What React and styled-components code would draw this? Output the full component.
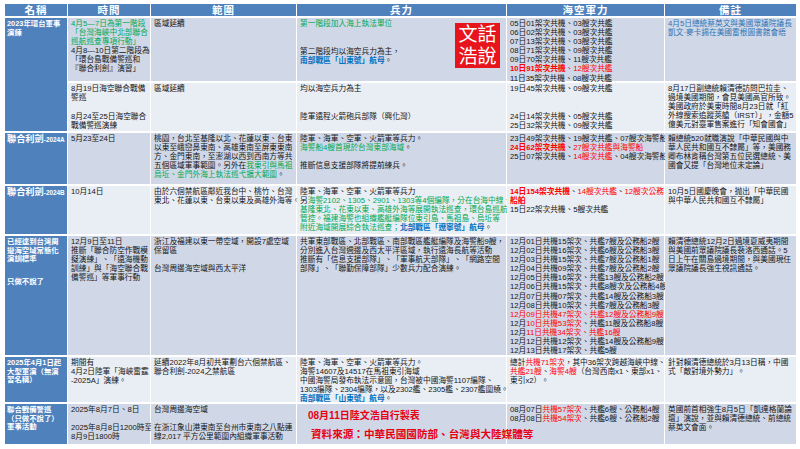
import React from 'react';
import styled, { createGlobalStyle } from 'styled-components';

const GlobalStyle = createGlobalStyle`
  html, body {
    margin: 0;
    padding: 0;
    background: #fff;
  }
  body {
    font-family: "Liberation Sans", "Noto Sans CJK TC", sans-serif;
  }
`;

const Page = styled.div`
  width: 800px;
  height: 449px;
  padding: 4px 4px 0 5px;
  box-sizing: border-box;
  overflow: hidden;
  background: #fff;
`;

// whole chart is one grid, header + 7 bands
const Table = styled.div`
  display: grid;
  grid-template-columns: 62px 82px 145px 209px 157px 131px;
  grid-template-rows: 12px 63px 48px 51px 48px 119px 45px 40px;
  column-gap: 1px;
  row-gap: 2px;
`;

const Head = styled.div`
  background: #4f81bd;
  color: #fff;
  font-size: 10.5px;
  font-weight: 700;
  line-height: 12px;
  text-align: center;
  letter-spacing: 1px;
`;

const Name = styled.div`
  grid-row: ${p => (p.$span ? `span ${p.$span}` : 'auto')};
  background: #4f81bd;
  color: #fff;
  font-size: 7.4px;
  font-weight: 700;
  line-height: 8.6px;
  padding: 2px 1px 0 2px;
  white-space: nowrap;
  overflow: hidden;
`;

const Cell = styled.div`
  position: relative;
  z-index: ${p => (p.$over ? 2 : 'auto')};
  background: ${p => (p.$tone === 'dark' ? '#d0d8e8' : '#e9edf4')};
  color: #151515;
  font-size: 7.7px;
  line-height: 9.1px;
  padding: 1px 1px 0 3px;
  white-space: nowrap;
`;

const Ln = styled.div`
  white-space: nowrap;
`;

const Sp = styled.div`
  height: ${p => p.$h}px;
`;

const G = styled.span`
  color: #00a84f;
`;

const R = styled.span`
  color: #ff0000;
  font-weight: ${p => (p.$b ? 700 : 400)};
`;

const B = styled.span`
  color: #0070c0;
  font-weight: 700;
`;

const Note = styled.span`
  color: #2e75b6;
`;

const Big = styled.span`
  font-size: 9.2px;
`;

const Small = styled.span`
  font-size: 6.4px;
`;

const Stamp = styled.div`
  position: absolute;
  left: 158px;
  top: 5px;
  width: 45px;
  height: 45px;
  background: #e8141c;
  color: #fff;
  font-size: 19px;
  line-height: 22px;
  text-align: center;
  display: flex;
  flex-direction: column;
  justify-content: center;
`;

const Sign = styled.div`
  color: #e60012;
  font-weight: 700;
  font-size: ${p => p.$size}px;
  line-height: 13px;
  padding-left: ${p => p.$indent}px;
  margin-top: ${p => p.$mt}px;
  white-space: nowrap;
`;

const heads = ['名稱', '時間', '範圍', '兵力', '海空軍力', '備註'];

const App = () => {
  return (
    <Page>
      <GlobalStyle />
      <Table>
        {heads.map(h => (
          <Head key={h}>{h}</Head>
        ))}

        {/* 2023 */}
        <Name $span={2}>
          <Ln>2023年環台軍事</Ln>
          <Ln>演練</Ln>
        </Name>
        <Cell $tone="dark">
          <Ln><G>4月5—7日為第一階段</G></Ln>
          <Ln><G>「台灣海峽中北部聯合</G></Ln>
          <Ln><G>巡航巡查專項行動」</G></Ln>
          <Ln>4月8—10日第二階段為</Ln>
          <Ln>「環台島戰備警巡和</Ln>
          <Ln>『聯合利劍』演習」</Ln>
        </Cell>
        <Cell $tone="dark">
          <Ln>區域延續</Ln>
        </Cell>
        <Cell $tone="dark">
          <Ln><G>第一階段加入海上執法單位</G></Ln>
          <Sp $h={19} />
          <Ln>第二階段均以海空兵力為主，</Ln>
          <Ln><B>南部戰區「山東號」航母</B>。</Ln>
          <Stamp>
            <span>文話</span>
            <span>浩說</span>
          </Stamp>
        </Cell>
        <Cell $tone="dark">
          <Ln>05日01架次共機、03艘次共艦</Ln>
          <Ln>06日02架次共機、03艘次共艦</Ln>
          <Ln>07日13架次共機、03艘次共艦</Ln>
          <Ln>08日71架次共機、09艘次共艦</Ln>
          <Ln>09日70架次共機、11艘次共艦</Ln>
          <Ln><R $b>10日91架次共機</R><R>、12艘次共艦</R></Ln>
          <Ln>11日35架次共機、08艘次共艦</Ln>
        </Cell>
        <Cell $tone="dark">
          <Ln><Note>4月5日總統蔡英文與美國眾議院議長</Note></Ln>
          <Ln><Note>凱文·麥卡錫在美國雷根圖書館會晤</Note></Ln>
        </Cell>

        <Cell $tone="light">
          <Ln>8月19日海空聯合戰備</Ln>
          <Ln>警巡</Ln>
          <Sp $h={10} />
          <Ln>8月24至25日海空聯合</Ln>
          <Ln>戰備警巡演練</Ln>
        </Cell>
        <Cell $tone="light">
          <Ln>區域延續</Ln>
        </Cell>
        <Cell $tone="light">
          <Ln>均以海空兵力為主</Ln>
          <Sp $h={19} />
          <Ln>陸軍遠程火箭砲兵部隊（興化灣）</Ln>
        </Cell>
        <Cell $tone="light">
          <Ln>19日45架次共機、09艘次共艦</Ln>
          <Sp $h={19} />
          <Ln>24日14架次共機、05艘次共艦</Ln>
          <Ln>25日32架次共機、09艘次共艦</Ln>
        </Cell>
        <Cell $tone="light">
          <Ln>8月17日副總統賴清德訪問巴拉圭、</Ln>
          <Ln>過境美國期間，會見美國高官所致。</Ln>
          <Ln>美國政府於美東時間8月23日就「紅</Ln>
          <Ln>外線搜索追蹤莢艙（IRST）」，金額5</Ln>
          <Ln>億美元對臺軍售案進行「知會國會」</Ln>
        </Cell>

        {/* 2024A */}
        <Name>
          <Ln><Big>聯合利劍</Big><Small>-2024A</Small></Ln>
        </Name>
        <Cell $tone="dark">
          <Ln>5月23至24日</Ln>
        </Cell>
        <Cell $tone="dark">
          <Ln>桃園，台北至基隆以北、花蓮以東、台東</Ln>
          <Ln>以東至峨巒鼻東南、高雄東南至屏東東南</Ln>
          <Ln>方、金門東南，至澎湖以西到西南方等共</Ln>
          <Ln>五個區域軍事範圍。另外在<G>我東引與馬祖</G></Ln>
          <Ln><G>烏坵、金門外海上執法巡弋擴大範圍</G>。</Ln>
        </Cell>
        <Cell $tone="dark">
          <Ln>陸軍、海軍、空軍、火箭軍等兵力。</Ln>
          <Ln><G>海警船4艘首現於台灣東部海域</G>。</Ln>
          <Sp $h={9} />
          <Ln>推斷信息支援部隊將提前練兵。</Ln>
        </Cell>
        <Cell $tone="dark">
          <Ln>23日49架次共機、19艘次共艦、07艘次海警船</Ln>
          <Ln><R $b>24日62架次共機</R>、<R>27艘次共艦與海警船</R></Ln>
          <Ln>25日07架次共機、<R>14艘次共艦</R>、04艘次海警船</Ln>
        </Cell>
        <Cell $tone="dark">
          <Ln>賴總統520就職演說「中華民國與中</Ln>
          <Ln>華人民共和國互不隸屬」等，美國務</Ln>
          <Ln>卿布林肯稱台灣第五位民選總統、美</Ln>
          <Ln>國會又提「台灣地位未定論」</Ln>
        </Cell>

        {/* 2024B */}
        <Name>
          <Ln><Big>聯合利劍</Big><Small>-2024B</Small></Ln>
        </Name>
        <Cell $tone="light">
          <Ln>10月14日</Ln>
        </Cell>
        <Cell $tone="light">
          <Ln>由於六個禁航區鄰近我台中、桃竹、台灣</Ln>
          <Ln>東北、花蓮以東、台東以東及高雄外海等。</Ln>
        </Cell>
        <Cell $tone="light">
          <Ln>陸軍、海軍、空軍、火箭軍等兵力</Ln>
          <Ln>另<G>海警2102、1305、2901、1303等4個編隊，分在台海中線、</G></Ln>
          <Ln><G>基隆東北、花東以東、高雄外海等展開執法巡查，環台島巡航</G></Ln>
          <Ln><G>管控。福建海警也組織艦艇編隊位東引島、馬祖島、烏坵等</G></Ln>
          <Ln><G>附近海域開展綜合執法巡查；</G><B>北部戰區「遼寧號」航母</B>。</Ln>
        </Cell>
        <Cell $tone="light">
          <Ln><R $b>14日154架次共機</R>、<R>14艘次共艦</R>、<R>12艘次公務</R></Ln>
          <Ln><R $b>船舶</R></Ln>
          <Ln>15日22架次共機、5艘次共艦</Ln>
        </Cell>
        <Cell $tone="light">
          <Ln>10月5日國慶晚會，抛出「中華民國</Ln>
          <Ln>與中華人民共和國互不隸屬」</Ln>
        </Cell>

        {/* 2024 Dec */}
        <Name>
          <Ln>已經達到台灣周</Ln>
          <Ln>邊海空域常態化</Ln>
          <Ln>演訓標準</Ln>
          <Sp $h={14} />
          <Ln>只做不說了</Ln>
        </Name>
        <Cell $tone="dark">
          <Ln>12月9日至11日</Ln>
          <Ln>推斷「聯合防空作戰模</Ln>
          <Ln>擬演練」、「遠海機動</Ln>
          <Ln>訓練」與「海空聯合戰</Ln>
          <Ln>備警巡」等軍事行動</Ln>
        </Cell>
        <Cell $tone="dark">
          <Ln>浙江及福建以東一帶空域，開設7處空域</Ln>
          <Ln>保留區</Ln>
          <Sp $h={9} />
          <Ln>台灣周邊海空域與西太平洋</Ln>
        </Cell>
        <Cell $tone="dark">
          <Ln>共軍東部戰區、北部戰區、南部戰區艦艇編隊及海警船9艘，</Ln>
          <Ln>分別進入台灣週邊及西太平洋區域，執行遠海長航等活動</Ln>
          <Ln>推斷有「信息支援部隊」、「軍事航天部隊」、「網路空間</Ln>
          <Ln>部隊」、「聯勤保障部隊」少數兵力配合演練。</Ln>
        </Cell>
        <Cell $tone="dark">
          <Ln>12月01日共機15架次、共艦7艘及公務船2艘</Ln>
          <Ln>12月02日共機16架次、共艦6艘及公務船3艘</Ln>
          <Ln>12月03日共機15架次、共艦7艘及公務船1艘</Ln>
          <Ln>12月04日共機09架次、共艦7艘及公務船2艘</Ln>
          <Ln>12月05日共機16架次、共艦13艘及公務船2艘</Ln>
          <Ln>12月06日共機15架次、共艦8艘次及公務船4艘</Ln>
          <Ln>12月07日共機07架次、共艦14艘及公務船3艘</Ln>
          <Ln>12月08日共機10架次、共艦7艘及公務船3艘</Ln>
          <Ln><R>12月09日共機47架次、共艦12艘及公務船9艘</R></Ln>
          <Ln>12月<R>10日共機53架次</R>、共艦11艘及公務船8艘</Ln>
          <Ln>12月<R>11日共機34架次、共艦16艘</R></Ln>
          <Ln>12月12日共機12架次、共艦14艘及公務船9艘</Ln>
          <Ln>12月13日共機17架次、共艦5艘</Ln>
        </Cell>
        <Cell $tone="dark">
          <Ln>賴清德總統12月2日過境夏威夷期間</Ln>
          <Ln>與美國前眾議院議長裴洛西通話。5</Ln>
          <Ln>日上午在關島過境期間，與美國現任</Ln>
          <Ln>眾議院議長強生視訊通話。</Ln>
        </Cell>

        {/* 2025 April */}
        <Name>
          <Ln>2025年4月1日起</Ln>
          <Ln>大型軍演（無演</Ln>
          <Ln>習名稱）</Ln>
        </Name>
        <Cell $tone="light">
          <Ln>期間有</Ln>
          <Ln>4月2日陸軍「海峽雷霆</Ln>
          <Ln>-2025A」演練。</Ln>
        </Cell>
        <Cell $tone="light">
          <Ln>延續2022年8月初共軍劃台六個禁航區、</Ln>
          <Ln>聯合利劍-2024之禁航區</Ln>
        </Cell>
        <Cell $tone="light">
          <Ln>陸軍、海軍、空軍、火箭軍等兵力。</Ln>
          <Ln>海警14607及14517在馬祖東引海域</Ln>
          <Ln>中國海警局發布執法示意圖，台灣被中國海警1107編隊、</Ln>
          <Ln>1303編隊、2304編隊，以及2302艦、2305艦、2307艦圍繞。</Ln>
          <Ln><B>南部戰區「山東號」航母</B>。</Ln>
        </Cell>
        <Cell $tone="light">
          <Ln>總計<R>共機71架次</R>，其中36架次跨越海峽中線、</Ln>
          <Ln><R>共艦21艘</R>、<R>海警4艘</R>（台灣西南x1、東部x1、</Ln>
          <Ln>東引x2）。</Ln>
        </Cell>
        <Cell $tone="light">
          <Ln>針對賴清德總統於3月13日稱，中國</Ln>
          <Ln>式「敵對境外勢力」。</Ln>
        </Cell>

        {/* 2025 August */}
        <Name>
          <Ln>聯合戰備警巡</Ln>
          <Ln>（只做不說了）</Ln>
          <Ln>軍事活動</Ln>
        </Name>
        <Cell $tone="dark">
          <Ln>2025年8月7日、8日</Ln>
          <Sp $h={9} />
          <Ln>2025年8月8日1200時至</Ln>
          <Ln>8月9日1800時</Ln>
        </Cell>
        <Cell $tone="dark">
          <Ln>台灣周邊海空域</Ln>
          <Sp $h={9} />
          <Ln>在浙江象山港東南至台州市東南之八點連</Ln>
          <Ln>線2,017 平方公里範圍內組織軍事活動</Ln>
        </Cell>
        <Cell $tone="dark" $over>
          <Sign $size={10} $indent={8} $mt={4}>08月11日陸文浩自行製表</Sign>
          <Sign $size={10.6} $indent={11} $mt={6}>資料來源：中華民國國防部、台灣與大陸媒體等</Sign>
        </Cell>
        <Cell $tone="dark">
          <Ln>08月07日<R>共機57架次</R>、共艦6艘、公務船4艘</Ln>
          <Ln>08月08日<R>共機54架次</R>、共艦6艘、公務船2艘</Ln>
        </Cell>
        <Cell $tone="dark">
          <Ln>英國前首相強生8月5日「凱達格蘭論</Ln>
          <Ln>壇」演說，並與賴清德總統、前總統</Ln>
          <Ln>蔡英文會面。</Ln>
        </Cell>
      </Table>
    </Page>
  );
};

export default App;
